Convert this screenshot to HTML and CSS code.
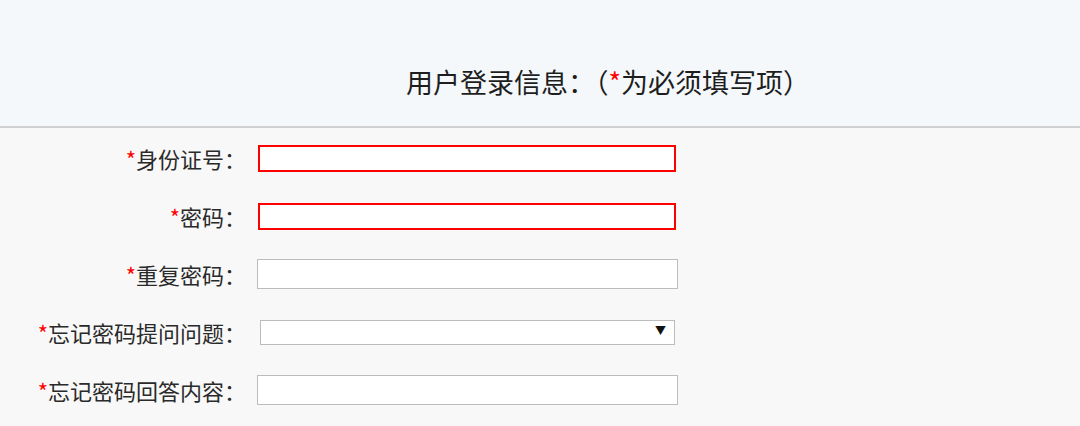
FILE: index.html
```html
<!DOCTYPE html>
<html lang="zh-CN">
<head>
<meta charset="utf-8">
<title>用户登录信息</title>
<link rel="stylesheet" href="styles.css">
</head>
<body>
<header class="head">
  <h1 class="title">用户登录信息：（<span class="req">*</span>为必须填写项）</h1>
</header>
<form class="form">
  <div class="row">
    <label class="lbl"><span class="req">*</span>身份证号：</label>
    <input class="field err" type="text">
  </div>
  <div class="row">
    <label class="lbl"><span class="req">*</span>密码：</label>
    <input class="field err" type="password">
  </div>
  <div class="row">
    <label class="lbl"><span class="req">*</span>重复密码：</label>
    <input class="field plain" type="password">
  </div>
  <div class="row">
    <label class="lbl"><span class="req">*</span>忘记密码提问问题：</label>
    <div class="sel-wrap">
      <select class="sel"><option></option></select>
      <span class="arrow">▼</span>
    </div>
  </div>
  <div class="row">
    <label class="lbl"><span class="req">*</span>忘记密码回答内容：</label>
    <input class="field plain" type="text">
  </div>
</form>
</body>
</html>
```

FILE: styles.css
```css
html, body {
  margin: 0;
  padding: 0;
}
body {
  background: #f8f8f8;
  font-family: "Noto Sans CJK SC", "Noto Sans", sans-serif;
  color: #333;
  width: 1080px;
  height: 426px;
  overflow: hidden;
}
.head {
  background: #f4f8fb;
  border-bottom: 2px solid #d0d0d0;
  box-sizing: border-box;
  height: 128px;
  padding-left: 406px;
  padding-top: 68px;
}
.title {
  margin: 0;
  font-weight: normal;
  font-size: 27px;
  color: #1e1e1e;
  line-height: 1;
}
.req {
  color: #f00;
}
.form {
  padding-top: 1px;
}
.row {
  height: 58px;
  display: flex;
  align-items: center;
}
.lbl {
  width: 246px;
  text-align: right;
  font-size: 22px;
  line-height: 1;
  color: #2a2a2a;
}
.field {
  box-sizing: border-box;
  background: #fff;
  outline: none;
  margin: 0;
  padding: 0 4px;
  font-size: 16px;
}
.err {
  border: 2px solid #f00;
  width: 418px;
  height: 27px;
  margin-left: 12px;
}
.plain {
  border: 1px solid #bcbcbc;
  width: 421px;
  height: 30px;
  margin-left: 11px;
}
.sel-wrap {
  position: relative;
  margin-left: 14px;
  margin-bottom: 4px;
  width: 415px;
  height: 25px;
}
.sel {
  appearance: none;
  -webkit-appearance: none;
  box-sizing: border-box;
  width: 100%;
  height: 100%;
  border: 1px solid #bcbcbc;
  border-radius: 0;
  background: #fff;
  margin: 0;
  outline: none;
}
.arrow {
  position: absolute;
  right: 9px;
  top: 50%;
  transform: translateY(-50%);
  font-size: 11px;
  line-height: 1;
  color: #111;
  pointer-events: none;
}
```
